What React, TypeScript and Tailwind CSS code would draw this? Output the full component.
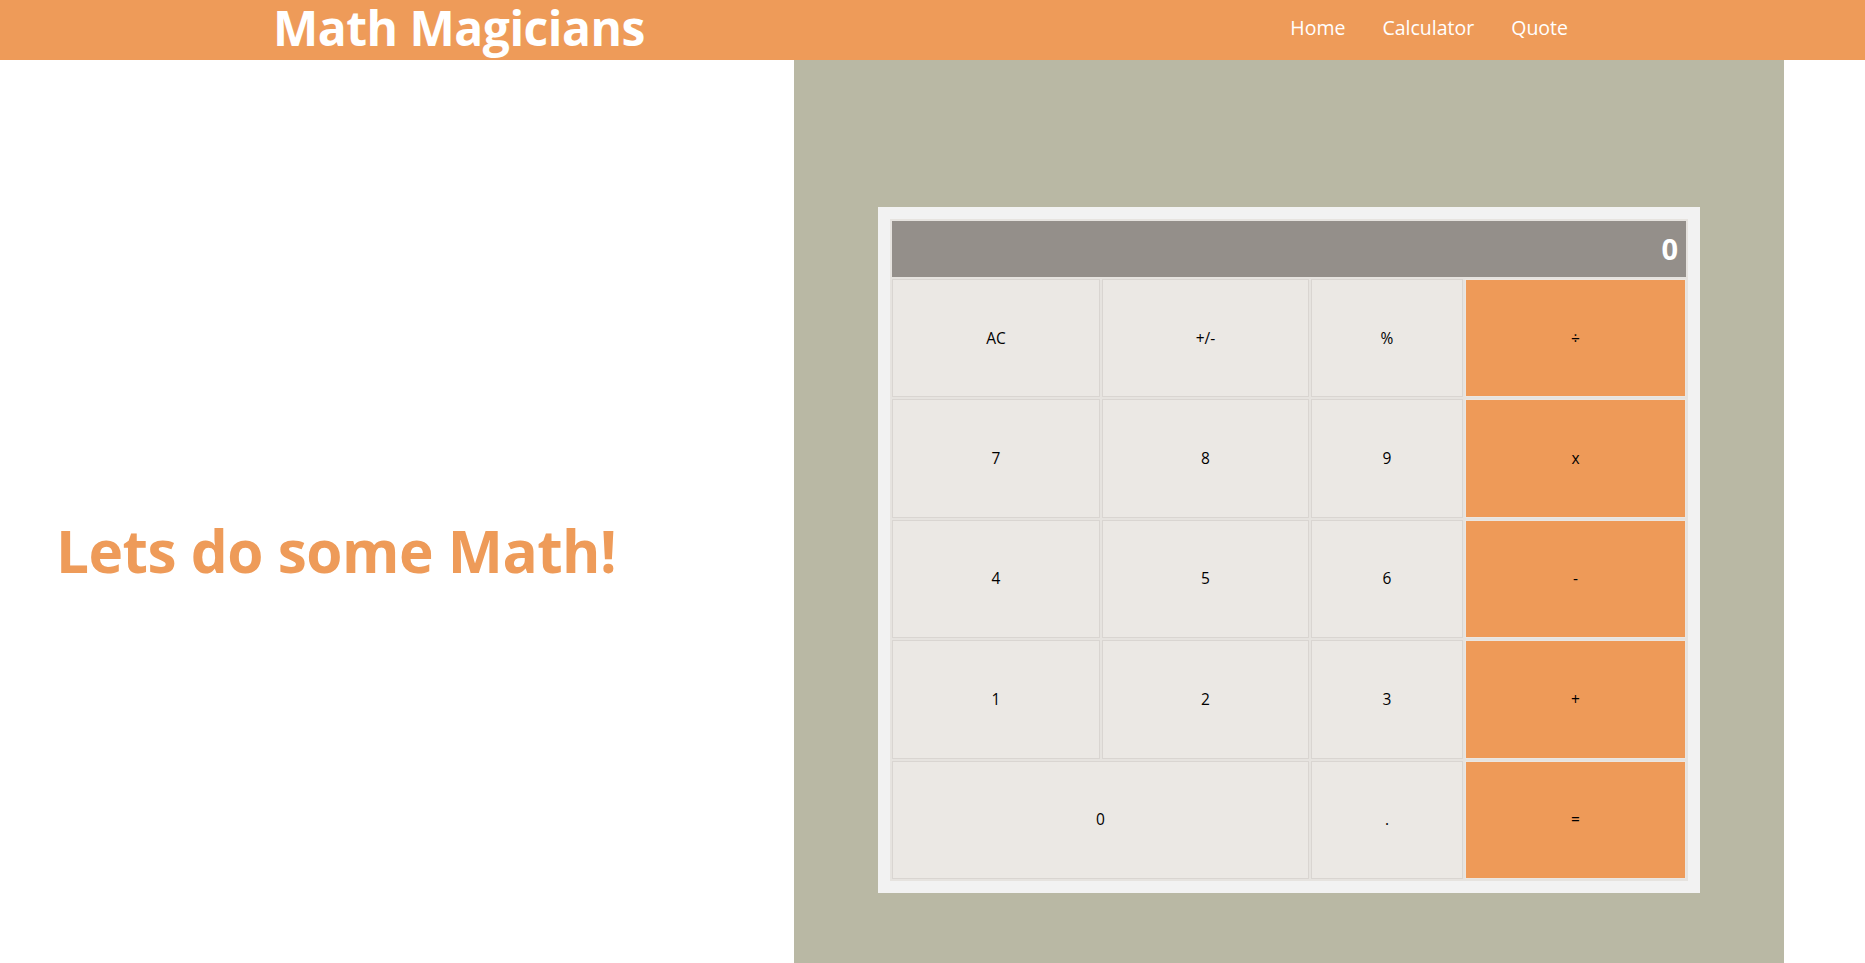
import React from "react";

const rows: { label: string; op?: boolean; span?: number }[][] = [
  [{ label: "AC" }, { label: "+/-" }, { label: "%" }, { label: "÷", op: true }],
  [{ label: "7" }, { label: "8" }, { label: "9" }, { label: "x", op: true }],
  [{ label: "4" }, { label: "5" }, { label: "6" }, { label: "-", op: true }],
  [{ label: "1" }, { label: "2" }, { label: "3" }, { label: "+", op: true }],
  [{ label: "0", span: 2 }, { label: "." }, { label: "=", op: true }],
];

export default function App() {
  const font = { fontFamily: '"Open Sans", "Noto Sans", sans-serif' };
  return (
    <div className="min-h-screen bg-white" style={font}>
      <header className="h-[60px] bg-[#ee9b59] flex items-center">
        <h1 className="ml-[273px] text-white font-bold text-[48px] leading-[52px] mb-[4px] tracking-[-0.5px]">
          Math Magicians
        </h1>
        <nav className="ml-auto mr-[297px] mb-[4px] flex items-center gap-[37px] text-white text-[19.5px] leading-none">
          <a>Home</a>
          <a>Calculator</a>
          <a>Quote</a>
        </nav>
      </header>
      <main className="flex">
        <section className="w-[794px] flex items-center pl-[56px]">
          <h2 className="text-[#ee9b59] font-bold text-[58.5px] leading-none tracking-[-0.5px]">
            Lets do some Math!
          </h2>
        </section>
        <section className="w-[990px] bg-[#b9b8a4] px-[84px] py-[147px]">
          <div className="bg-[#f2f2f2] p-[12px]">
            <div className="bg-[#e6e3df] p-[2px]">
              <div className="h-[56px] bg-[#948f8a] flex items-center justify-end pr-[8px] text-white font-bold text-[29px]">
                0
              </div>
              <div className="mt-[2px] grid grid-cols-[208px_207px_152px_221px] auto-rows-[118.4px] gap-[2px]">
                {rows.flat().map((b, i) => (
                  <div
                    key={i}
                    className={
                      (b.span === 2 ? "col-span-2 " : "") +
                      (b.op
                        ? "bg-[#ee9a58] border border-[#ebe6e1] "
                        : "bg-[#ebe8e4] border border-[#d9d5d1] ") +
                      "flex items-center justify-center text-black text-[15.5px]"
                    }
                  >
                    {b.label}
                  </div>
                ))}
              </div>
            </div>
          </div>
        </section>
        <section className="flex-1 bg-white" />
      </main>
    </div>
  );
}
